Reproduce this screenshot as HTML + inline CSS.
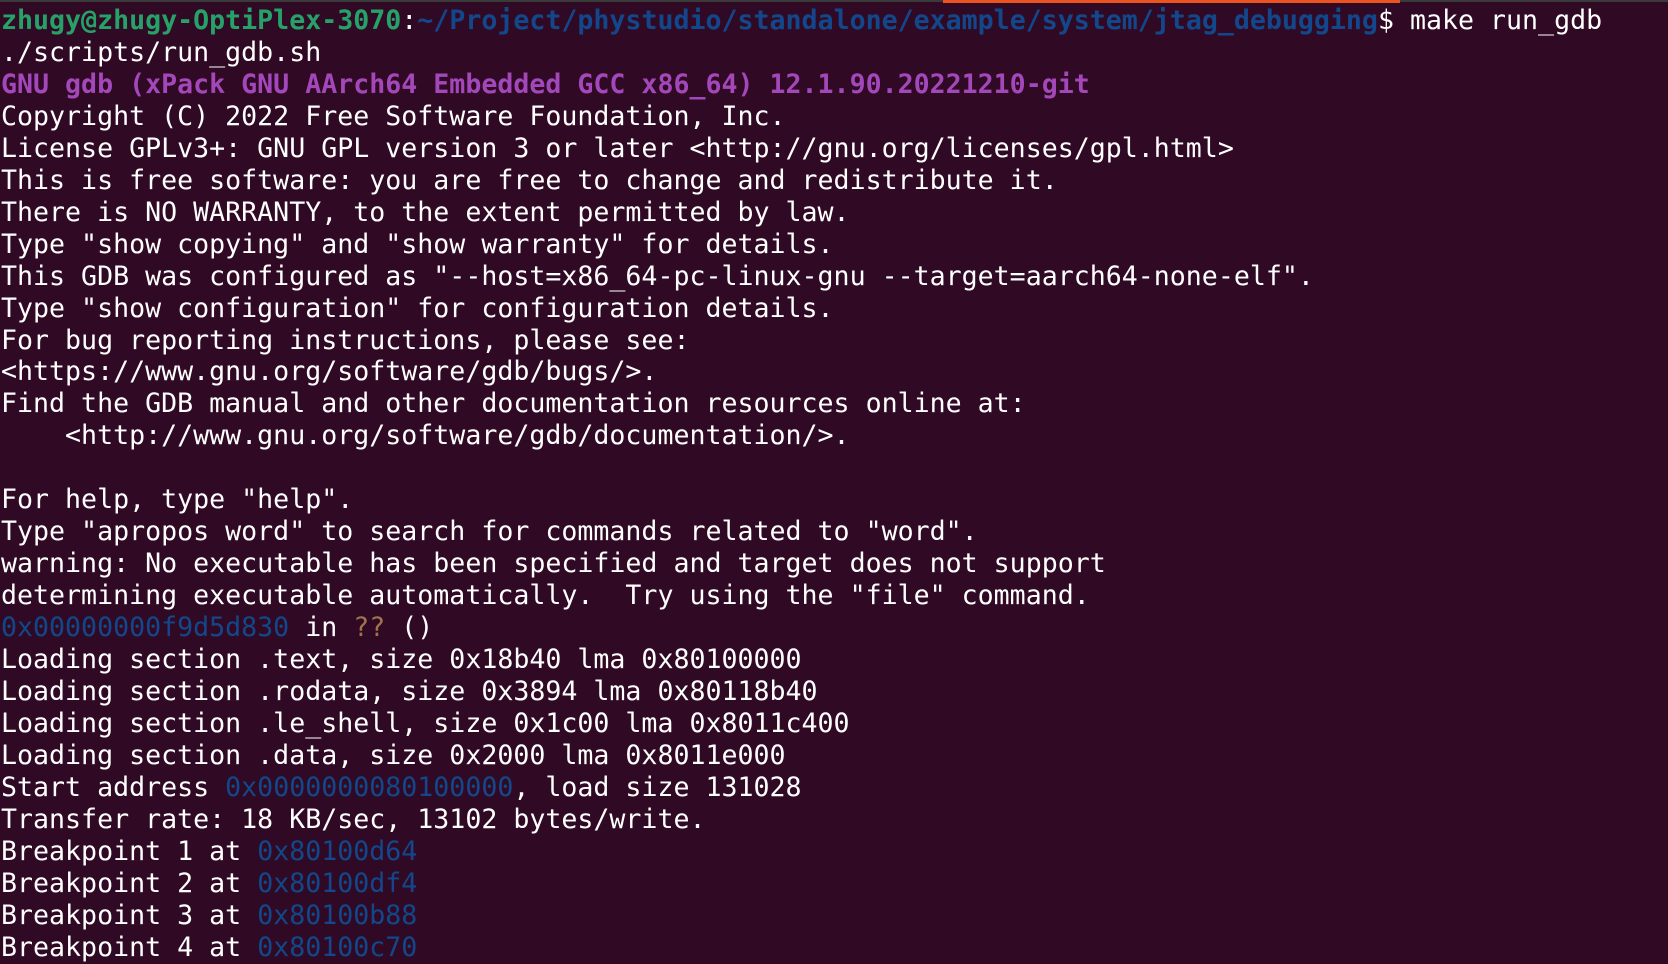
<!DOCTYPE html>
<html><head><meta charset="utf-8"><style>
html,body{margin:0;padding:0;background:#300a24;width:1668px;height:956px;overflow:hidden}
.t{position:absolute;left:1px;top:5px;font-family:"DejaVu Sans Mono","Liberation Mono",monospace;font-size:26.6px;line-height:31.95px;color:#ffffff;white-space:pre}
.g{color:#26a269;font-weight:bold}.b{color:#12488b;font-weight:bold}.p{color:#a347ba;font-weight:bold}
.a{color:#12488b}.y{color:#a2734c}
.top{position:absolute;top:0;left:0;width:1668px;height:2px;background:#3a3a3a}
.or{position:absolute;top:0;left:943px;width:457px;height:3px;background:#e95420}
</style></head><body>
<div class="top"></div><div class="or"></div>
<div class="t"><span class="g">zhugy@zhugy-OptiPlex-3070</span>:<span class="b">~/Project/phystudio/standalone/example/system/jtag_debugging</span>$ make run_gdb
./scripts/run_gdb.sh
<span class="p">GNU gdb (xPack GNU AArch64 Embedded GCC x86_64) 12.1.90.20221210-git</span>
Copyright (C) 2022 Free Software Foundation, Inc.
License GPLv3+: GNU GPL version 3 or later &lt;http://gnu.org/licenses/gpl.html&gt;
This is free software: you are free to change and redistribute it.
There is NO WARRANTY, to the extent permitted by law.
Type "show copying" and "show warranty" for details.
This GDB was configured as "--host=x86_64-pc-linux-gnu --target=aarch64-none-elf".
Type "show configuration" for configuration details.
For bug reporting instructions, please see:
&lt;https://www.gnu.org/software/gdb/bugs/&gt;.
Find the GDB manual and other documentation resources online at:
    &lt;http://www.gnu.org/software/gdb/documentation/&gt;.

For help, type "help".
Type "apropos word" to search for commands related to "word".
warning: No executable has been specified and target does not support
determining executable automatically.  Try using the "file" command.
<span class="a">0x00000000f9d5d830</span> in <span class="y">??</span> ()
Loading section .text, size 0x18b40 lma 0x80100000
Loading section .rodata, size 0x3894 lma 0x80118b40
Loading section .le_shell, size 0x1c00 lma 0x8011c400
Loading section .data, size 0x2000 lma 0x8011e000
Start address <span class="a">0x0000000080100000</span>, load size 131028
Transfer rate: 18 KB/sec, 13102 bytes/write.
Breakpoint 1 at <span class="a">0x80100d64</span>
Breakpoint 2 at <span class="a">0x80100df4</span>
Breakpoint 3 at <span class="a">0x80100b88</span>
Breakpoint 4 at <span class="a">0x80100c70</span></div>
</body></html>
